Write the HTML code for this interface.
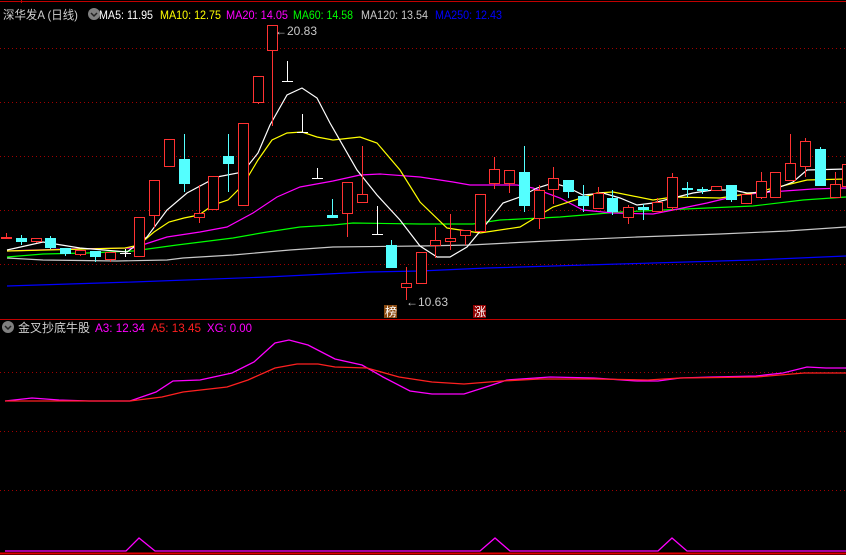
<!DOCTYPE html>
<html><head><meta charset="utf-8"><style>
html,body{margin:0;padding:0;background:#000;width:846px;height:555px;overflow:hidden}
svg{display:block}
text{font-family:"Liberation Sans","Noto Sans CJK SC",sans-serif;font-size:12px}
</style></head><body>
<svg id="s" width="846" height="555" xmlns="http://www.w3.org/2000/svg">
<rect width="846" height="555" fill="#000"/>
<line x1="0" y1="1.5" x2="846" y2="1.5" stroke="#c00000"/>
<line x1="21.5" y1="0" x2="21.5" y2="3" stroke="#c00000"/>
<g stroke="#a00000" stroke-dasharray="1,3">
<line x1="0" y1="48.5" x2="846" y2="48.5"/><line x1="0" y1="102.5" x2="846" y2="102.5"/>
<line x1="0" y1="156.5" x2="846" y2="156.5"/><line x1="0" y1="210.5" x2="846" y2="210.5"/>
<line x1="0" y1="264.5" x2="846" y2="264.5"/>
<line x1="0" y1="372.5" x2="846" y2="372.5"/><line x1="0" y1="431.5" x2="846" y2="431.5"/>
<line x1="0" y1="490.5" x2="846" y2="490.5"/>
</g>
<line x1="0" y1="319.5" x2="846" y2="319.5" stroke="#c00000"/>
<line x1="0" y1="553.5" x2="846" y2="553.5" stroke="#e00000" stroke-width="2"/>
<g id="ma" fill="none" stroke-width="1.2"></g>
<g id="cd"></g>
<g fill="none" stroke-width="1.3">
<polyline stroke="#ff00ff" points="5,401 32,398 59,400 89,401 130,401 156,392 173,381 200,380 232,373 254,362 275,343 289,340 308,345 335,359 362,365 383,377 410,391 432,394 464,394 486,387 507,380 550,377 594,378 637,381 658,381 680,378 712,377 756,376 783,373 807,367 826,368 846,368"/>
<polyline stroke="#ff2020" points="5,401 89,401 130,401 162,397 183,392 227,387 248,380 275,368 297,364 318,364 335,367 367,368 399,377 432,382 464,384 502,381 540,379 594,379 648,380 680,378 756,377 804,373 846,373"/>
<polyline stroke="#ff00ff" points="5,551 126,551 139,538 155,551 480,551 495,538 510,551 658,551 672,538 687,551 846,551"/>
</g>
<text x="3" y="19" fill="#d0d0d0" textLength="75" lengthAdjust="spacingAndGlyphs">深华发A (日线)</text>
<circle cx="94" cy="14" r="6" fill="#808080"/><path d="M91,13 l3,3 l3,-3" stroke="#222" stroke-width="1.5" fill="none"/>
<text x="99" y="19" fill="#ffffff" textLength="54" lengthAdjust="spacingAndGlyphs">MA5: 11.95</text>
<text x="160" y="19" fill="#ffff00" textLength="61" lengthAdjust="spacingAndGlyphs">MA10: 12.75</text>
<text x="226" y="19" fill="#ff00ff" textLength="62" lengthAdjust="spacingAndGlyphs">MA20: 14.05</text>
<text x="293" y="19" fill="#00ff00" textLength="60" lengthAdjust="spacingAndGlyphs">MA60: 14.58</text>
<text x="361" y="19" fill="#c8c8c8" textLength="67" lengthAdjust="spacingAndGlyphs">MA120: 13.54</text>
<text x="435" y="19" fill="#0000ff" textLength="67" lengthAdjust="spacingAndGlyphs">MA250: 12.43</text>
<text x="275" y="35" fill="#c8c8c8">←20.83</text>
<text x="406" y="306" fill="#c8c8c8">←10.63</text>
<rect x="384" y="305" width="13" height="13" fill="#8b4a10"/><text x="385" y="316" fill="#fff">榜</text>
<rect x="473" y="305" width="13" height="13" fill="#900000"/><text x="474" y="316" fill="#fff">涨</text>
<circle cx="8" cy="327" r="6" fill="#808080"/><path d="M5,326 l3,3 l3,-3" stroke="#222" stroke-width="1.5" fill="none"/>
<text x="18" y="332" fill="#d0d0d0" textLength="72" lengthAdjust="spacingAndGlyphs">金叉抄底牛股</text>
<text x="95" y="332" fill="#ff00ff" textLength="50" lengthAdjust="spacingAndGlyphs">A3: 12.34</text>
<text x="151" y="332" fill="#ff2020" textLength="50" lengthAdjust="spacingAndGlyphs">A5: 13.45</text>
<text x="207" y="332" fill="#ff00ff" textLength="45" lengthAdjust="spacingAndGlyphs">XG: 0.00</text>
</svg>
<script>
var NS="http://www.w3.org/2000/svg";
var ma=[
["#0000ff","7,286 133,282 267,277 367,272 420,271 487,268 653,263 753,260 846,256"],
["#c8c8c8","7,258 43,260 117,261 167,260 183,258 233,255 290,250 333,247 420,246 470,245 547,241 637,237 720,234 787,231 846,227"],
["#00ff00","7,257 43,254 87,253 133,251 177,245 233,238 267,232 300,227 333,225 353,223 420,224 473,224 500,220 560,217 620,212 707,208 753,206 803,200 846,197"],
["#ff00ff","7,251 67,249 133,248 167,237 200,232 227,227 253,213 277,197 300,187 333,181 360,175 380,174 420,177 453,182 470,185 517,185 533,188 560,198 583,210 613,213 653,214 673,210 707,203 740,195 770,192 813,189 846,188"],
["#ffff00","7,251 125,248 139,245 154,232 169,222 184,218 199,215 213,205 228,200 243,185 258,160 272,140 287,133 302,132 317,137 333,140 360,137 377,143 400,170 420,202 447,228 480,233 520,227 553,207 597,193 613,192 653,200 673,197 720,198 753,193 807,180 846,179"],
["#ffffff","7,250 43,242 80,248 127,252 147,237 167,210 187,193 217,177 243,172 258,153 270,125 287,95 302,88 317,98 330,123 357,170 377,195 400,220 420,246 437,257 450,257 467,247 487,223 503,203 520,197 537,188 553,183 567,187 583,195 603,193 620,198 637,205 653,203 673,198 693,193 713,190 733,190 747,193 767,192 793,182 807,170 846,169"]];
var g=document.getElementById("ma");
ma.forEach(function(m){var p=document.createElementNS(NS,"polyline");p.setAttribute("points",m[1]);p.setAttribute("stroke",m[0]);g.appendChild(p);});
var C=[
[6,237,238,233,238,"r"],[21,238,242,235,245,"c"],[36,238,241,238,243,"r"],[50,238,248,236,249,"c"],[65,248,254,248,256,"c"],
[80,250,254,250,256,"r"],[95,251,257,251,262,"c"],[110,252,259,252,262,"r"],[125,253,253,249,257,"w"],[139,217,256,217,257,"r"],
[154,180,215,180,228,"r"],[169,139,166,139,166,"r"],[184,159,184,134,192,"c"],[199,213,217,185,223,"r"],[213,176,209,176,209,"r"],
[228,156,164,134,192,"c"],[243,123,205,123,205,"r"],[258,76,102,76,104,"r"],[272,25,50,25,126,"r"],[287,81,81,61,81,"w"],
[302,132,132,114,132,"w"],[317,178,178,168,178,"w"],[332,215,218,199,218,"c"],[347,182,213,182,237,"r"],[362,194,202,146,202,"r"],
[377,234,234,206,234,"w"],[391,245,268,240,268,"c"],[406,283,287,267,300,"r"],[421,252,283,252,283,"r"],[435,240,245,227,258,"r"],
[450,238,241,214,250,"r"],[465,230,235,230,245,"r"],[480,194,231,194,231,"r"],[494,169,183,157,189,"r"],[509,170,183,170,193,"r"],
[524,172,206,146,212,"c"],[539,190,218,185,229,"r"],[553,178,189,167,204,"r"],[568,180,192,180,198,"c"],[583,196,206,185,212,"c"],
[598,193,208,187,208,"r"],[612,198,212,190,215,"c"],[628,207,217,205,224,"r"],[643,207,210,204,220,"c"],[657,202,211,198,211,"r"],
[672,177,207,173,211,"r"],[687,188,190,182,197,"c"],[702,189,191,187,194,"c"],[716,186,190,186,190,"r"],[731,185,200,185,202,"c"],
[746,194,203,194,203,"r"],[761,181,197,172,199,"r"],[775,172,197,172,197,"r"],[790,163,180,134,180,"r"],[805,141,166,138,177,"r"],
[820,149,186,147,186,"c"],[835,184,197,172,197,"r"],[847,164,186,164,186,"r"]];
var cd=document.getElementById("cd");
function el(t,a){var e=document.createElementNS(NS,t);for(var k in a)e.setAttribute(k,a[k]);cd.appendChild(e);}
C.forEach(function(c){var x=c[0],t=c[1],b=c[2],h=c[3],l=c[4],k=c[5];
 if(k=="w"){el("line",{x1:x+.5,y1:h,x2:x+.5,y2:l,stroke:"#fff"});el("line",{x1:x-5,y1:t+.5,x2:x+6,y2:t+.5,stroke:"#fff"});return;}
 var col=k=="r"?"#ff3232":"#54ffff";
 el("line",{x1:x+.5,y1:h,x2:x+.5,y2:l,stroke:col});
 if(k=="r"){el("rect",{x:x-4.5,y:t+.5,width:10,height:Math.max(b-t,1),fill:"#000",stroke:col});}
 else{el("rect",{x:x-5,y:t,width:11,height:Math.max(b-t,2),fill:col});}
});
</script>
</body></html>
